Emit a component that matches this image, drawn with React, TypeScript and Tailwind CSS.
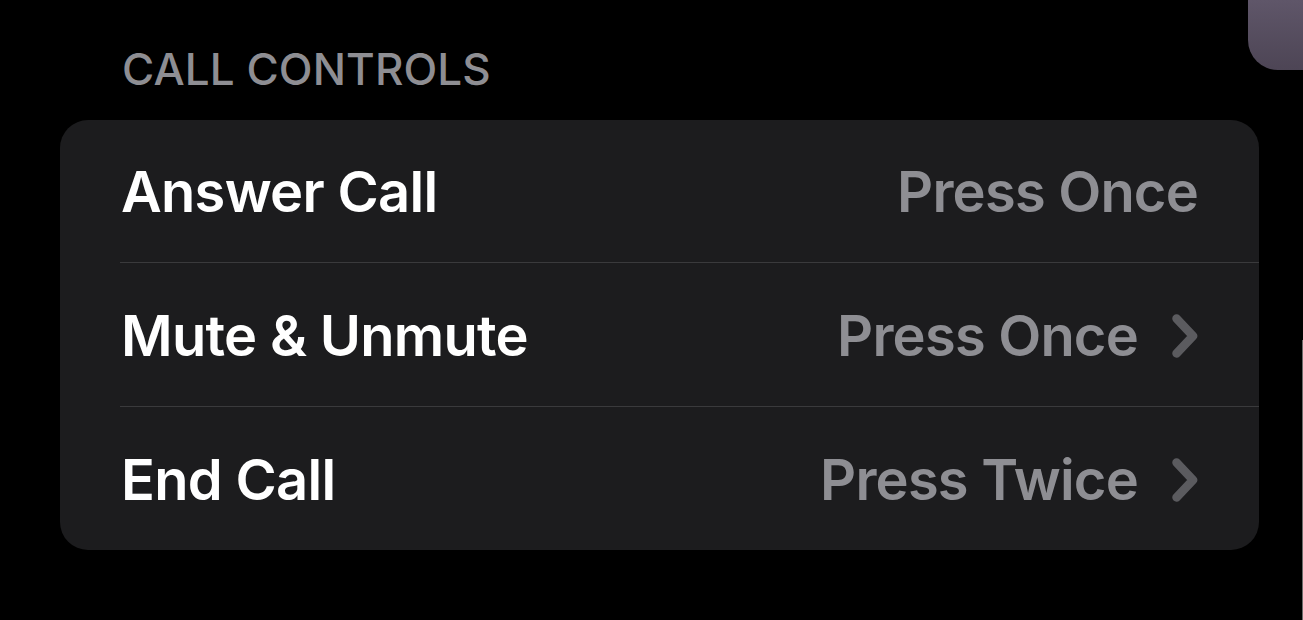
import React from "react";

type Row = { label: string; value: string; chevron?: boolean };

const rows: Row[] = [
  { label: "Answer Call", value: "Press Once" },
  { label: "Mute & Unmute", value: "Press Once", chevron: true },
  { label: "End Call", value: "Press Twice", chevron: true },
];

const Chevron = () => (
  <svg width="26" height="44" viewBox="0 0 26 44" className="shrink-0">
    <path
      d="M4.5 4.5 L21 22 L4.5 39.5"
      fill="none"
      stroke="#5b5b5f"
      strokeWidth="8.5"
      strokeLinecap="round"
      strokeLinejoin="round"
    />
  </svg>
);

export default function App() {
  return (
    <div
      className="relative w-[1303px] h-[620px] overflow-hidden bg-black"
      style={{ fontFamily: "Inter, 'Noto Sans', sans-serif" }}
    >
      {/* top-right peeking element */}
      <div className="absolute right-0 top-0 w-[55px] h-[70px] rounded-bl-[30px] bg-gradient-to-b from-[#5f5669] to-[#4d4555]" />
      {/* right edge line */}
      <div className="absolute right-0 top-[340px] bottom-0 w-px bg-[#6b6b6b]" />

      <div className="pl-[60px] pr-[44px] pt-[41px]">
        <div className="pl-[62px] h-[79px] text-[44px] leading-[56px] font-medium text-[#8e8e93] tracking-[0.1px]">
          CALL CONTROLS
        </div>

        <div className="rounded-[28px] bg-[#1c1c1e] overflow-hidden">
          {rows.map((r, i) => (
            <div key={r.label}>
              {i > 0 && <div className="ml-[60px] h-px bg-[#3a3a3c]" />}
              <div
                className={`flex items-center justify-between ${
                  i === 0 ? "h-[142px] pt-[1px]" : "h-[143px] pt-[3px]"
                } pl-[61px] pr-[61px]`}
              >
                <span className="text-[56px] font-semibold text-white tracking-[-0.7px]">
                  {r.label}
                </span>
                <div className="flex items-center gap-[34px]">
                  <span className="text-[56px] font-semibold text-[#8e8e93] tracking-[-0.8px]">
                    {r.value}
                  </span>
                  {r.chevron && <Chevron />}
                </div>
              </div>
            </div>
          ))}
        </div>
      </div>
    </div>
  );
}
